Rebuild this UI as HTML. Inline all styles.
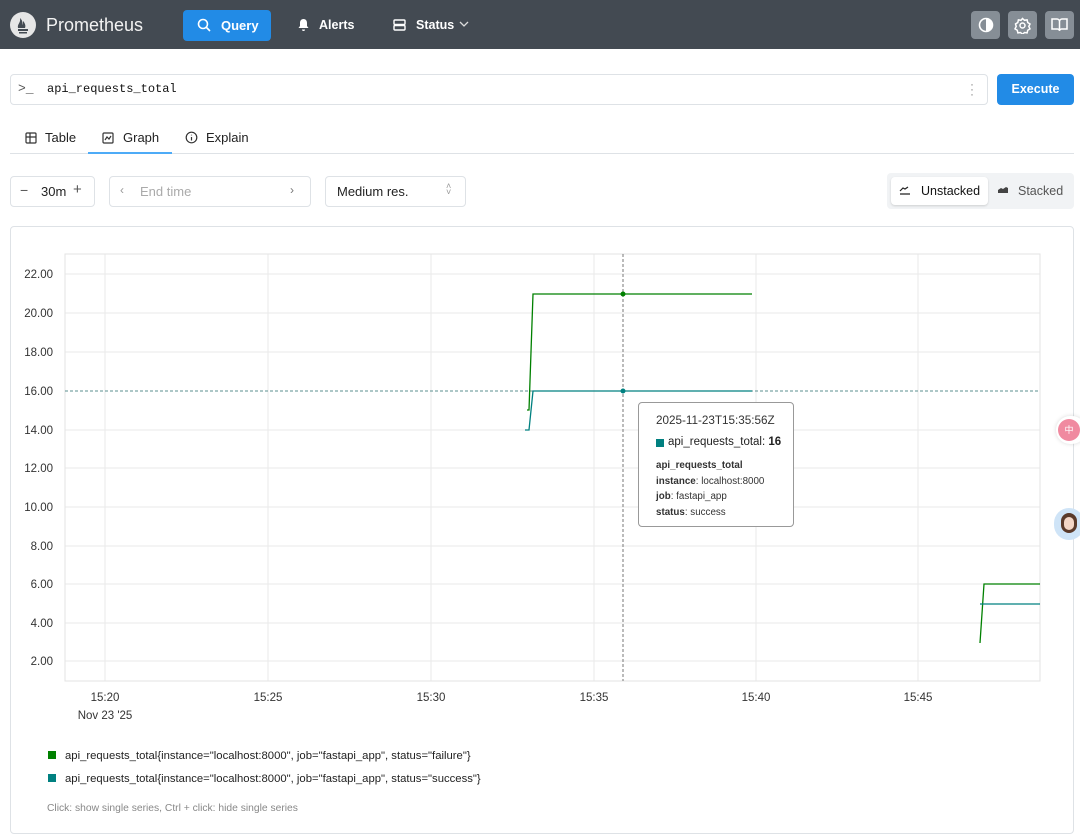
<!DOCTYPE html>
<html><head><meta charset="utf-8"><style>
*{box-sizing:border-box;margin:0;padding:0}
body{width:1080px;height:835px;background:#fff;font-family:"Liberation Sans",sans-serif;color:#222;position:relative;overflow:hidden}
.nav{position:absolute;left:0;top:0;width:1080px;height:49px;background:#434a52}
.abs{position:absolute}
.btn{position:absolute;border:1px solid #dee2e6;border-radius:4px;background:#fff}
</style></head><body>
<div class="nav">
  <svg class="abs" style="left:10px;top:12px" width="26" height="26" viewBox="0 0 26 26"><circle cx="13" cy="13" r="13" fill="#e6e6e6"/><path d="M8 17h10v2H8zM9 20h8v1.5H9zM8 16c-1-4 3-5 2-10 2 2 3 4 2 7 1-1 1-3 1-4 2 2 3 5 2 7z" fill="#434a52"/></svg>
  <div class="abs" style="left:46px;top:15px;font-size:18px;color:#f2f2f2">Prometheus</div>
  <div class="abs" style="left:183px;top:10px;width:88px;height:31px;background:#228be6;border-radius:4px;color:#fff;font-size:13px;font-weight:bold;line-height:31px;padding-left:38px">Query</div>
  <svg class="abs" style="left:197px;top:18px" width="14" height="14" viewBox="0 0 14 14" fill="none" stroke="#fff" stroke-width="1.6"><circle cx="6" cy="6" r="4.5"/><path d="M9.5 9.5L13 13"/></svg>
  <svg class="abs" style="left:297px;top:18px" width="13" height="14" viewBox="0 0 13 14"><path d="M6.5 1C4 1 3 3 3 5v3L1.5 10h10L10 8V5c0-2-1-4-3.5-4zM5 11.5h3a1.5 1.5 0 0 1-3 0z" fill="#fff"/></svg>
  <div class="abs" style="left:319px;top:18px;color:#fff;font-size:12.5px;font-weight:bold">Alerts</div>
  <svg class="abs" style="left:393px;top:19px" width="13" height="12" viewBox="0 0 13 12" fill="none" stroke="#fff" stroke-width="1.4"><rect x="1" y="1" width="11" height="4.5" rx="1"/><rect x="1" y="6.5" width="11" height="4.5" rx="1"/></svg>
  <div class="abs" style="left:416px;top:18px;color:#fff;font-size:12.5px;font-weight:bold">Status</div>
  <svg class="abs" style="left:459px;top:21px" width="10" height="7" viewBox="0 0 10 7" fill="none" stroke="#ddd" stroke-width="1.3"><path d="M1 1l4 4 4-4"/></svg>
  <div class="abs" style="left:971px;top:11px;width:29px;height:28px;background:#868e96;border-radius:4px"></div>
  <svg class="abs" style="left:978px;top:17px" width="16" height="16" viewBox="0 0 16 16"><circle cx="8" cy="8" r="6.5" fill="none" stroke="#fff" stroke-width="1.6"/><path d="M8 1.5a6.5 6.5 0 0 1 0 13z" fill="#fff"/></svg>
  <div class="abs" style="left:1008px;top:11px;width:29px;height:28px;background:#868e96;border-radius:4px"></div>
  <svg class="abs" style="left:1014px;top:17px" width="17" height="17" viewBox="0 0 17 17" fill="none" stroke="#fff" stroke-width="1.5"><circle cx="8.5" cy="8.5" r="2.5"/><path d="M8.5 1.5l2 1.8 2.6-.4.6 2.6 2.3 1.5-1.2 2.4 1.2 2.4-2.3 1.5-.6 2.6-2.6-.4-2 1.8-2-1.8-2.6.4-.6-2.6-2.3-1.5 1.2-2.4L1.5 7l2.3-1.5.6-2.6 2.6.4z"/></svg>
  <div class="abs" style="left:1045px;top:11px;width:29px;height:28px;background:#868e96;border-radius:4px"></div>
  <svg class="abs" style="left:1051px;top:18px" width="17" height="14" viewBox="0 0 17 14" fill="none" stroke="#fff" stroke-width="1.5"><path d="M1 1h5a2.5 2.5 0 0 1 2.5 2.5V13A2 2 0 0 0 6.5 11H1zM16 1h-5a2.5 2.5 0 0 0-2.5 2.5V13a2 2 0 0 1 2-2H16z"/></svg>
</div>

<div class="btn" style="left:10px;top:74px;width:978px;height:31px"></div>
<div class="abs" style="left:18px;top:81px;font-family:'Liberation Mono',monospace;font-size:13px;color:#555">&gt;_</div>
<div class="abs" style="left:47px;top:82px;font-family:'Liberation Mono',monospace;font-size:12px;color:#111">api_requests_total</div>
<div class="abs" style="left:970px;top:82px;font-size:12px;color:#888;line-height:5px">·<br>·<br>·</div>
<div class="abs" style="left:997px;top:74px;width:77px;height:31px;background:#228be6;border-radius:4px;color:#fff;font-size:12.5px;font-weight:bold;text-align:center;line-height:31px">Execute</div>

<div class="abs" style="left:10px;top:153px;width:1064px;height:1px;background:#dee2e6"></div>
<div class="abs" style="left:88px;top:152px;width:84px;height:2px;background:#4dabf7"></div>
<svg class="abs" style="left:25px;top:132px" width="12" height="12" viewBox="0 0 12 12" fill="none" stroke="#333" stroke-width="1.2"><rect x="1" y="1" width="10" height="10" rx="1"/><path d="M1 5h10M5 1v10"/></svg>
<div class="abs" style="left:45px;top:130px;font-size:13px">Table</div>
<svg class="abs" style="left:102px;top:132px" width="12" height="12" viewBox="0 0 12 12" fill="none" stroke="#333" stroke-width="1.2"><rect x="1" y="1" width="10" height="10" rx="1"/><path d="M3 8l2-3 2 2 2-3"/></svg>
<div class="abs" style="left:123px;top:130px;font-size:13px">Graph</div>
<svg class="abs" style="left:185px;top:131px" width="13" height="13" viewBox="0 0 13 13" fill="none" stroke="#333" stroke-width="1.2"><circle cx="6.5" cy="6.5" r="5.3"/><path d="M6.5 6v3.5M6.5 3.8v.6"/></svg>
<div class="abs" style="left:206px;top:130px;font-size:13px">Explain</div>

<div class="btn" style="left:10px;top:176px;width:85px;height:31px"></div>
<div class="abs" style="left:20px;top:182px;font-size:14px;color:#555">−</div>
<div class="abs" style="left:41px;top:184px;font-size:13px">30m</div>
<div class="abs" style="left:73px;top:181px;font-size:15px;color:#555">+</div>
<div class="btn" style="left:109px;top:176px;width:202px;height:31px"></div>
<div class="abs" style="left:120px;top:183px;font-size:12px;color:#999">‹</div>
<div class="abs" style="left:140px;top:184px;font-size:13px;color:#aaa">End time</div>
<div class="abs" style="left:290px;top:183px;font-size:12px;color:#777">›</div>
<div class="btn" style="left:325px;top:176px;width:141px;height:31px"></div>
<div class="abs" style="left:337px;top:184px;font-size:13px">Medium res.</div>
<div class="abs" style="left:446px;top:183px;font-size:9px;color:#999;line-height:6px">˄<br>˅</div>

<div class="abs" style="left:887px;top:173px;width:187px;height:36px;background:#f1f3f5;border-radius:4px"></div>
<div class="abs" style="left:891px;top:177px;width:97px;height:28px;background:#fff;border-radius:4px;box-shadow:0 1px 2px rgba(0,0,0,.15)"></div>
<svg class="abs" style="left:899px;top:185px" width="12" height="10" viewBox="0 0 12 10" fill="none" stroke="#222" stroke-width="1.2"><path d="M1 9h10M1 6l3-3 2 1 3-2"/></svg>
<div class="abs" style="left:921px;top:184px;font-size:12.5px;color:#111">Unstacked</div>
<svg class="abs" style="left:997px;top:185px" width="12" height="10" viewBox="0 0 12 10"><path d="M1 9h10M1 8V5l3-2 2 1 3-2 2 1v5z" fill="#444"/></svg>
<div class="abs" style="left:1018px;top:184px;font-size:12.5px;color:#555">Stacked</div>

<div class="abs" style="left:10px;top:226px;width:1064px;height:608px;border:1px solid #dee2e6;border-radius:4px"></div>
<svg class="abs" style="left:0;top:0" width="1080" height="835" font-family="Liberation Sans,sans-serif">
<g stroke="#eaeaea" stroke-width="1">
<line x1="65" y1="274" x2="1040" y2="274"/><line x1="65" y1="313" x2="1040" y2="313"/><line x1="65" y1="352" x2="1040" y2="352"/><line x1="65" y1="430" x2="1040" y2="430"/><line x1="65" y1="468" x2="1040" y2="468"/><line x1="65" y1="507" x2="1040" y2="507"/><line x1="65" y1="546" x2="1040" y2="546"/><line x1="65" y1="584" x2="1040" y2="584"/><line x1="65" y1="623" x2="1040" y2="623"/><line x1="65" y1="661" x2="1040" y2="661"/>
<line x1="105" y1="254" x2="105" y2="681"/><line x1="268" y1="254" x2="268" y2="681"/><line x1="431" y1="254" x2="431" y2="681"/><line x1="594" y1="254" x2="594" y2="681"/><line x1="756" y1="254" x2="756" y2="681"/><line x1="918" y1="254" x2="918" y2="681"/>
</g>
<rect x="65" y="254" width="975" height="427" fill="none" stroke="#e3e3e3"/>
<g font-size="11.5" fill="#333" text-anchor="end">
<text x="53" y="278">22.00</text><text x="53" y="317">20.00</text><text x="53" y="356">18.00</text><text x="53" y="395">16.00</text><text x="53" y="434">14.00</text><text x="53" y="472">12.00</text><text x="53" y="511">10.00</text><text x="53" y="550">8.00</text><text x="53" y="588">6.00</text><text x="53" y="627">4.00</text><text x="53" y="665">2.00</text>
</g>
<g font-size="11.5" fill="#333" text-anchor="middle">
<text x="105" y="701">15:20</text><text x="105" y="719">Nov 23 '25</text><text x="268" y="701">15:25</text><text x="431" y="701">15:30</text><text x="594" y="701">15:35</text><text x="756" y="701">15:40</text><text x="918" y="701">15:45</text>
</g>
<line x1="65" y1="391" x2="1040" y2="391" stroke="#5b8f8f" stroke-dasharray="3,2"/>
<line x1="623" y1="254" x2="623" y2="681" stroke="#777" stroke-dasharray="3,2"/>
<path d="M527 410H529L533 294H752" fill="none" stroke="#008000" stroke-width="1.3"/>
<path d="M525 430H529L533 391H752" fill="none" stroke="#008080" stroke-width="1.3"/>
<path d="M980 643L984 584H1040" fill="none" stroke="#008000" stroke-width="1.3"/>
<path d="M980 604H1040" fill="none" stroke="#008080" stroke-width="1.3"/>
<circle cx="623" cy="294" r="2.5" fill="#008000"/><circle cx="623" cy="391" r="2.5" fill="#008080"/>
<rect x="48" y="751" width="8" height="8" fill="#008000"/>
<rect x="48" y="774" width="8" height="8" fill="#008080"/>
<text x="65" y="759" font-size="11.3" fill="#222">api_requests_total{instance="localhost:8000", job="fastapi_app", status="failure"}</text>
<text x="65" y="782" font-size="11.3" fill="#222">api_requests_total{instance="localhost:8000", job="fastapi_app", status="success"}</text>
<text x="47" y="811" font-size="10.3" fill="#888">Click: show single series, Ctrl + click: hide single series</text>
</svg>

<div class="abs" style="left:638px;top:402px;width:156px;height:125px;background:#fff;border:1px solid #999;border-radius:4px"></div>
<div class="abs" style="left:656px;top:414px;font-size:11.7px;color:#333">2025-11-23T15:35:56Z</div>
<div class="abs" style="left:656px;top:439px;width:8px;height:8px;background:#008080"></div>
<div class="abs" style="left:668px;top:436px;font-size:11.5px;color:#222">api_requests_total: <b>16</b></div>
<div class="abs" style="left:656px;top:458px;font-size:9.8px;line-height:15.5px;color:#333"><b>api_requests_total</b><br><b>instance</b>: localhost:8000<br><b>job</b>: fastapi_app<br><b>status</b>: success</div>

<div class="abs" style="left:1056px;top:416px;width:30px;height:28px;background:#fff;border-radius:14px;box-shadow:0 0 4px rgba(0,0,0,.15)"></div>
<div class="abs" style="left:1058px;top:419px;width:22px;height:22px;background:#f08aa0;border-radius:11px;color:#fff;font-size:9px;text-align:center;line-height:22px;font-family:'Noto Sans CJK SC',sans-serif">中</div>
<div class="abs" style="left:1054px;top:508px;width:30px;height:32px;background:#cfe4f7;border-radius:16px"></div>
<div class="abs" style="left:1061px;top:513px;width:16px;height:20px;background:#5a3a2a;border-radius:8px"></div>
<div class="abs" style="left:1064px;top:517px;width:10px;height:13px;background:#f3d6c6;border-radius:5px"></div>
</body></html>
